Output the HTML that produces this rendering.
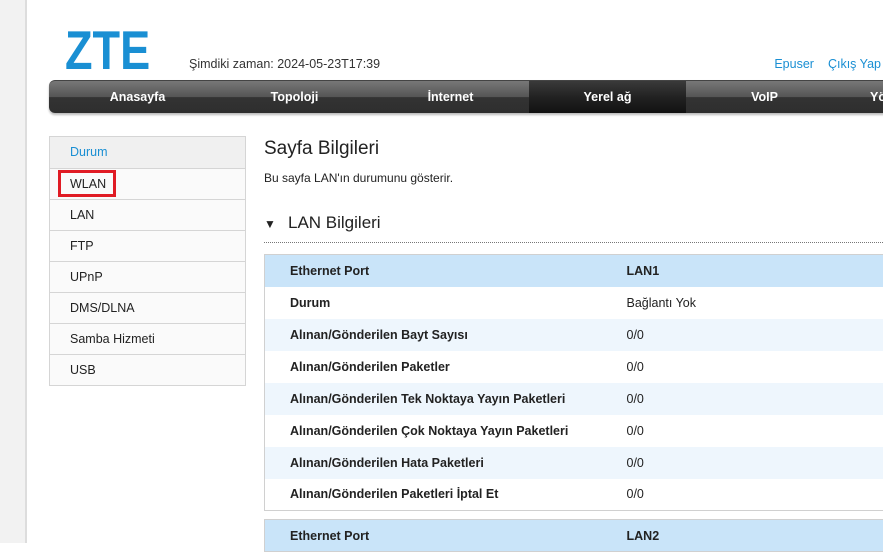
<!DOCTYPE html>
<html><head><meta charset="utf-8"><style>
*{margin:0;padding:0;box-sizing:border-box}
body{width:883px;height:543px;overflow:hidden;background:#fff;font-family:"Liberation Sans","DejaVu Sans",sans-serif;font-size:12px;color:#222;position:relative}
.strip{position:absolute;left:0;top:0;width:27px;height:543px;background:#f2f2f2;border-right:2px solid #ddd}
.logo{position:absolute;left:65px;top:25px;font-size:55px;font-weight:bold;color:#1a8fd3;line-height:50px;font-family:"Liberation Sans",sans-serif;transform:scaleX(0.82);transform-origin:0 0}
.time{position:absolute;left:189px;top:57px;font-size:12.5px;color:#333}
.links{position:absolute;right:2px;top:57px;font-size:12.5px;color:#1a8fd3;word-spacing:0}
.links span{margin-left:14px}
.nav{position:absolute;left:49px;top:80px;width:850px;height:33px;border-radius:6px 0 0 6px;background:linear-gradient(#777 0,#555 50%,#333 51%,#2e2e2e 100%);box-shadow:0 2px 2px #bbb;border-top:1px solid #444}
.nav div{position:absolute;top:0;height:32px;line-height:32px;color:#fff;font-weight:bold;font-size:12.5px;text-align:center;width:157px}
.nav .act{background:linear-gradient(#3a3a3a,#222 50%,#111);}
.side{position:absolute;left:49px;top:136px;width:197px;border:1px solid #d5d5d5}
.side div{height:31px;line-height:31px;padding-left:20px;border-top:1px solid #d5d5d5;background:#fafafa;font-size:12.5px;color:#222}
.side div:first-child{border-top:0;background:#f0f0f0;color:#1a8fd3}
.wl{position:absolute;left:58px;top:170px;width:58px;height:27px;border:3px solid #e01b24}
h1{position:absolute;left:264px;top:138px;font-size:19px;font-weight:normal;color:#222}
.desc{position:absolute;left:264px;top:171px;font-size:12px}
.sec{position:absolute;left:264px;top:213px;width:619px;height:30px;border-bottom:1px dotted #777;font-size:17px}
.sec b{font-size:12px;margin-right:10px;display:inline-block;width:14px}
table{position:absolute;left:264px;border-collapse:collapse;width:640px;border:1px solid #d0d0d0}
td{height:32px;padding-left:25px;font-size:12.5px}
td:first-child{font-weight:bold;width:337px}
td+td{padding-left:25px}
tr.h td{background:#c9e4f9;font-weight:bold}
tr.a td{background:#eef6fd}
</style></head><body>
<div class="strip"></div>
<div class="logo">ZTE</div>
<div class="time">Şimdiki zaman: 2024-05-23T17:39</div>
<div class="links"><span>Epuser</span><span>Çıkış Yap</span></div>
<div class="nav">
<div style="left:10px">Anasayfa</div>
<div style="left:167px">Topoloji</div>
<div style="left:323px">İnternet</div>
<div class="act" style="left:480px">Yerel ağ</div>
<div style="left:637px">VoIP</div>
<div style="left:793px;text-align:left;padding-left:28px">Yönetim</div>
</div>
<div class="side"><div>Durum</div><div>WLAN</div><div>LAN</div><div>FTP</div><div>UPnP</div><div>DMS/DLNA</div><div>Samba Hizmeti</div><div>USB</div></div>
<div class="wl"></div>
<h1>Sayfa Bilgileri</h1>
<div class="desc">Bu sayfa LAN'ın durumunu gösterir.</div>
<div class="sec"><b>▼</b>LAN Bilgileri</div>
<table style="top:254px">
<tr class="h"><td>Ethernet Port</td><td>LAN1</td></tr>
<tr><td>Durum</td><td>Bağlantı Yok</td></tr>
<tr class="a"><td>Alınan/Gönderilen Bayt Sayısı</td><td>0/0</td></tr>
<tr><td>Alınan/Gönderilen Paketler</td><td>0/0</td></tr>
<tr class="a"><td>Alınan/Gönderilen Tek Noktaya Yayın Paketleri</td><td>0/0</td></tr>
<tr><td>Alınan/Gönderilen Çok Noktaya Yayın Paketleri</td><td>0/0</td></tr>
<tr class="a"><td>Alınan/Gönderilen Hata Paketleri</td><td>0/0</td></tr>
<tr><td>Alınan/Gönderilen Paketleri İptal Et</td><td>0/0</td></tr>
</table>
<table style="top:519px">
<tr class="h"><td>Ethernet Port</td><td>LAN2</td></tr>
</table>
</body></html>
